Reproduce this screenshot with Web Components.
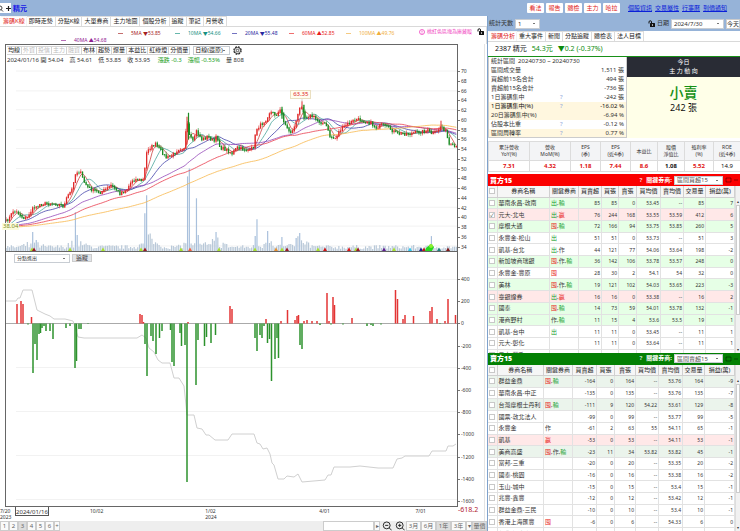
<!DOCTYPE html>
<html lang="zh-Hant">
<head>
<meta charset="utf-8">
<title>精元 籌碼K線</title>
<style>
html,body{margin:0;height:100%}
body{font:6px/9px "Noto Sans","Noto Sans CJK TC",sans-serif;color:#333;background:#fff;overflow:hidden}
</style>
</head>
<body>
<stock-app></stock-app>
<script>
const base = `*{box-sizing:border-box}
button,select,input{font:inherit;color:inherit;margin:0;padding:0;border:0;background:none;border-radius:0}
select{appearance:none;border:1px solid #c8cdd3;background:linear-gradient(#777,#777) right 4px center/2px 1px no-repeat #fff;padding:0 2px;line-height:1}
table{border-collapse:collapse;table-layout:fixed;width:100%}th,td{padding:0;font-weight:400}`;
const define = (name, render, after) => customElements.define(name, class extends HTMLElement {
  connectedCallback() {
    if (this.shadowRoot) return;
    const t = document.createElement('template');
    t.innerHTML = render(this);
    this.attachShadow({ mode: 'open' }).append(t.content.cloneNode(true));
    const s = document.createElement('style'); s.textContent = base; this.shadowRoot.prepend(s);
    if (after) after(this.shadowRoot, this);
  }
});
const lockIcon = `<svg width="7" height="7" viewBox="0 0 14 14" aria-hidden="true"><path d="M2 7V4a2.5 2.5 0 0 1 5 0v2" fill="none" stroke="#111" stroke-width="2"/><rect x="4" y="6" width="10" height="8" rx="1" fill="#111"/><circle cx="9" cy="10" r="1.3" fill="#fff"/></svg>`;

define('app-header', () => `<style>
:host{display:flex;align-items:center;height:16px;background:#96b3d8}
.s{width:11px;height:10px;background:#fff;display:flex;align-items:center;justify-content:space-between}
.n{font-size:7px;font-weight:700;color:#1414e6;margin-left:2px;flex:1}
nav{display:flex;gap:2px}
nav button{background:#fff;color:#e02020;width:17px;height:10px;border-radius:1px;line-height:9px}
.l{width:112px;margin-left:8px;gap:3px}a{color:#0a20d8}
</style><button class="s" aria-label="搜尋"><svg width="4" height="7" viewBox="0 0 4 7"><circle cx="0" cy="3" r="2" fill="none" stroke="#444"/><path d="M1 4.500l2 2" stroke="#444"/></svg><svg width="5" height="5" viewBox="0 0 5 5"><path d="M0 2.500h5M2.500 0v5" stroke="#222" stroke-width="1.200"/></svg></button>
<span class="n">精元</span><nav>${['看法','報告','體檢','主力','哈拉'].map(x=>`<button>${x}</button>`).join('')}</nav>
<nav class="l">${['個股資訊','交易屬性','行事曆','到價通知'].map(x=>`<a href="#">${x}</a>`).join('')}</nav>`);

define('tab-strip', el => `<style>
:host{display:flex;height:11px;border-bottom:1px solid #d9d9d9;padding-left:1px;background:#fff}
button{padding:0 2px;border:1px solid #dcdcdc;border-width:1px 1px 0 0;line-height:9px;color:#222;white-space:nowrap}
button:first-of-type{color:#e02020;border-color:#f4f4f4;padding-right:1px}
</style>${el.getAttribute('items').split(',').map(x=>`<button>${x}</button>`).join('')}`);

define('ma-legend', () => `<style>
:host{display:block;height:17px;padding:1px 8px 0 0;border-right:1px solid #ddd;font-size:5px;line-height:7px;position:relative}
div{display:flex;padding-top:2px}.m{flex:0 0 57px}.m:first-child{margin-left:118px}.m::before{content:"";display:inline-block;width:5px;border-top:1px solid;margin-right:8px;vertical-align:middle;opacity:.65}
.a .m:first-child{margin-left:61px}.a{padding-top:0}.pink{position:absolute;right:2px;top:0;gap:2px;align-items:center;color:#f040c0;padding-top:1px}.pink span{margin-right:3px}
</style><div>${[['5MA ▼53.85','#a52020'],['10MA ▼54.66','#159080'],['20MA ▼55.48','#2828a0'],['60MA ▲52.85','#e82020'],['100MA ▲49.76','#f0ae3c']].map(x=>`<span class="m" style="color:${x[1]}">${x[0]}</span>`).join('')}</div>
<div class="a"><span class="m" style="color:#902090">40MA ▲54.68</span></div>
<div class="pink"><svg width="6" height="6" viewBox="0 0 12 12" aria-hidden="true"><circle cx="6" cy="6" r="5" fill="none" stroke="#f040c0" stroke-width="1.600"/><path d="M6 3v4M6 8v1.500" stroke="#f040c0" stroke-width="1.500"/></svg><span>桃紅色區塊為庫藏股</span>${lockIcon}</div>`);

const keys=[[6,222],[10,218],[13,212],[19,214],[23,219],[30,216],[33,207],[36,209],[40,205],[50,204],[58,205],[64,207],[67,198],[72,190],[74,180],[76,173],[80,172],[84,182],[88,188],[93,191],[100,193],[106,190],[111,186],[114,188],[120,194],[127,190],[132,181],[137,180],[143,181],[145,168],[147,150],[151,148],[155,144],[160,150],[166,158],[172,156],[178,150],[184,148],[187,122],[189,135],[193,142],[196,131],[202,140],[208,137],[214,142],[217,136],[220,148],[226,150],[232,154],[237,148],[245,150],[250,151],[254,146],[256,130],[262,124],[266,120],[270,112],[276,115],[281,110],[284,122],[288,130],[292,133],[296,122],[300,108],[302,106],[305,117],[312,116],[318,121],[326,125],[330,137],[335,139],[339,132],[345,126],[355,120],[360,120],[370,123],[376,128],[382,125],[390,129],[397,134],[410,134],[420,132],[428,131],[432,134],[437,132],[441,126],[446,132],[449,145],[456,148]];
const spikes=[[33,233],[36,241],[75,213],[77,236],[145,214],[147,196],[187,177],[189,169],[196,199],[199,236],[216,233],[255,237],[257,220],[268,232],[282,238],[297,239],[300,234],[431,237]];
let seed=7; const rnd=()=>(seed=(seed*16807)%2147483647)/2147483647;
function priceSvg(){
  const step=1.78,n=254,c=[]; let k=0;
  for(let i=0;i<n;i++){const x=6+i*step;while(k<keys.length-2&&keys[k+1][0]<x)k++;const [a,b]=keys[k],[d,e]=keys[k+1];c.push(b+(e-b)*Math.min(1,(x-a)/(d-a))+(rnd()-.5)*3);}
  const pre=Array.from({length:110},(_,i)=>230-i*.02), all=pre.concat(c);
  let o='';
  for(const y of [71,91,110,130,149,169,188,208,227,247])o+=`<path d="M16 ${y}H457" stroke="#f2f2f2"/>`;
  for(let i=0;i<n;i++){const x=6+i*step;
    const near=keys=>keys.find(s=>Math.abs(s[0]-x)<=step/2);
    const busy=[[33,5],[77,9],[150,13],[190,7],[215,11],[268,10],[300,11]].reduce((m,[p,h])=>m+h*Math.exp(-Math.pow((x-p)/9,2)),0);
    const sp=near(spikes), top=sp?sp[1]:252-2-rnd()*4-busy*rnd();
    o+=`<path d="M${x} 252V${top}" stroke="${sp?'#a9c0dc':'#b8c8d8'}" stroke-width="1.2"/>`;}
  [[5,'#c44'],[10,'#4aa59c'],[20,'#4242aa'],[40,'#9447b8'],[60,'#e83c4c'],[100,'#f8b84c']].forEach(([w,col])=>{
    let s=0,d='';for(let i=110-w;i<110;i++)s+=all[i];
    for(let i=0;i<n;i++){s+=all[i+110]-all[i+110-w];d+=(i?'L':'M')+(6+i*step).toFixed(1)+' '+(s/w).toFixed(1);}
    o+=`<path d="${d}" fill="none" stroke="${col}" stroke-width=".8"/>`;});
  for(let i=0;i<n;i++){const x=6+i*step,p=i?c[i-1]:c[i]+1,up=c[i]<=p,col=up?'#e02a2a':'#1c8c24';
    const hi=Math.min(p,c[i])-rnd()*3,lo=Math.max(p,c[i])+rnd()*3;
    o+=`<path d="M${x} ${hi}V${lo}" stroke="${col}" stroke-width=".6"/><path d="M${x} ${Math.min(p,c[i])-.4}V${Math.max(p,c[i])+.6}" stroke="${col}" stroke-width="1.3"/>`;}
  o+='<path d="M187 117V145M302 101V110M441 121V129" stroke="#e02a2a"/><path d="M188.500 113V140M282 107V119M304 105V120" stroke="#1c8c24" stroke-width="1.200"/><path d="M302 98V102" stroke="#ddd"/>';
  const y='#a8e030',m='#9c1c28';
  [[32,y],[34,m],[70,y],[103,y],[141,y],[145,m],[181,y],[190,'#f06040'],[219,y],[255,y],[276,'#e89030'],[282,y],[287,m],[318,y],[325,'#d01818'],[349,'#e01818'],[356,y],[358,m],[384,'#602090'],[394,y],[410,'#30c8f0'],[421,'#202090'],[424,'#c01818'],[439,'#208080'],[448,'#801818']].forEach(([x,f])=>o+=`<path d="M${x} 248.500l2 3.500h-4z" fill="${f}"/>`);
  return o+'<path d="M431 245l3 3-2 4h-7l1-3z" fill="#28d820"/><circle cx="431" cy="247" r="2" fill="#8cf030"/>';
}
const flow=[[17,304],[21,301],[23,304],[31.5,317],[140,314],[142,315],[143.5,322],[188,322],[230,306],[232,309],[28,324.5],[33,373],[35,344],[37,360],[39,334],[40.5,333],[42,328],[44,326],[46,331],[50,331],[53,339],[66,328],[70,326],[75,368],[76.5,361],[79,329],[81,329],[88,324],[145,344],[147,376],[151,336],[153,341],[156,354],[159.5,338],[162,331],[170.5,330],[172,362],[174,366],[180,333],[181.5,346],[185,345],[187,482],[196,385],[198,340],[204.5,346],[206.5,337],[211,343],[215.5,335],[255,338],[257,351],[260,335],[262,338],[264,326],[266,319],[267.5,343],[269.5,339],[271.5,381],[275,359],[277,338],[278.5,358],[300,345],[302,349],[281,321],[287.5,310],[295,320],[297,316],[298.5,315],[304,321],[307,320],[312,321],[317,321],[327,293],[329,321],[333,297],[334.5,305],[352,318],[395.5,290],[397.5,299],[403,319],[405,315],[413.5,316],[430,311],[432,307],[437,319],[445,321],[448,299],[455.5,315],[320,325],[331,324.5],[343,324.5],[367,326],[371,325],[373,326],[381,324.5],[440,324]];
const flowSvg=()=>[279,323,367,411,455,499].map(y=>`<path d="M${y==323?6:16} ${y+.5}H457" stroke="${y==323?'#aaa':'#f2f2f2'}"/>`).join('')
 +`<path d="M6 301H16L18 298H20L23 290H32L37 310L45 314L50 316L54 319H65L73 321L78 337L84 338H137L142 335L146 338L149 348L154 352L158 360L162 363H170L174 378H179L184 386L187 415H194L197 428L202 429L206 435H209L215 440H228L232 434H254L257 443L260 444L263 449L267 448L270 454L272 463L274 465L278 479H284L287 476L294 477L298 474L302 482L325 480L328 475H331L334 467H350L360 466L378 468H393L397 459L402 458L405 456H429L432 451H446L448 446H453L456 444" fill="none" stroke="#d0d0d0"/>`
 +flow.map(([x,y])=>`<path d="M${x} 323.500V${y}" stroke="${y<323.5?'#e33434':'#2c922c'}" stroke-width="1.500"/>`).join('');

define('k-chart', () => `<style>
:host{display:grid;grid-template-columns:5px minmax(0,1fr) 26px;grid-template-rows:22px minmax(0,186fr) 14px minmax(0,241fr);flex:1;min-height:0;border-right:1px solid #e4e4e4;margin-right:2px}
.c{grid-column:2;border:0 solid #666;border-width:0 1px}
.top{border-top-width:1px}.t{display:flex;height:10px;align-items:center;padding-left:1px;color:#222}
.t button{padding:0 1px;border:1px solid #d4d4d4;border-left:0;height:9px;line-height:7px}.t .off{color:#bbb}.t select{width:37px;height:9px;margin:0 3px;padding:0 1px}
.i{display:flex;gap:6px;padding-left:1px;font-size:6px;line-height:10px;white-space:nowrap}.g{color:#20a020}
.price,.flow{border-bottom-width:1px;position:relative;min-height:0}svg.p{display:block;width:100%;height:100%}
.tag{position:absolute;background:#fffdf0;border:1px solid #eadfc0;color:#e02020;line-height:7px;padding:0 2px;left:63%;top:13%;font-size:6px}
.low{left:-4px;top:85%;color:#7c8a20;border:0;background:#fbfbdc;padding:0 1px}
.s{display:flex;align-items:center;gap:2px;padding:0 0 2px 8px}.s select{width:56px;height:9px;font-size:5px}.s button{width:20px;height:8px;background:#e2e5ea;border:1px solid #ccc;line-height:6px}
.ax{grid-column:3;display:flex;flex-direction:column;justify-content:space-between;font-size:5px;color:#333;padding-top:1px}.ax span{line-height:9px;display:flex;align-items:center}.ax span::before{content:"";width:2px;border-top:1px solid #777;margin-right:1px}
.f{padding:9px 0 1px}
</style>
<div class="c top"><div class="t">${['均線','外資','投信','主力','融資','布林','趨勢','爆量','本益比','紅綠燈','分價量'].map((x,i)=>`<button class="${i>0&&i<5?'off':''}">${x}</button>`).join('')}<select aria-label="線型"><option>日線(還原)</option></select><svg width="9" height="9" viewBox="0 0 18 18"><circle cx="9" cy="9" r="7" fill="none" stroke="#222" stroke-width="3" stroke-dasharray="3.500 2"/><circle cx="9" cy="9" r="6" fill="#fff" stroke="#222" stroke-width="1.500"/><circle cx="9" cy="9" r="2.500" fill="none" stroke="#222" stroke-width="1.500"/></svg></div>
<div class="i"><span>2024/01/16 開 54.04</span><span>高 54.61</span><span>低 53.85</span><span>收 53.95</span><span class="g">&nbsp;漲跌 -0.3</span><span class="g">漲幅 -0.53%</span><span>量 808</span></div></div>
<div class="c price"><svg class="p" viewBox="6 66 451 186" preserveAspectRatio="none">${priceSvg()}</svg><span class="tag">63.35</span><span class="tag low">38.04</span></div>
<div class="ax">${Array.from({length:19},(_,i)=>`<span>${70-2*i}</span>`).join('')}</div>
<div class="c s"><select aria-label="指標"><option>分點進出</option></select><button>追蹤</button></div>
<div class="c flow"><svg class="p" viewBox="6 266 451 240" preserveAspectRatio="none">${flowSvg()}</svg></div>
<div class="ax f">${Array.from({length:11},(_,i)=>`<span>${400-200*i}</span>`).join('')}</div>`);

define('date-axis', () => `<style>
:host{display:grid;grid-template-columns:15px 34px 32px minmax(0,90fr) minmax(0,90fr) minmax(0,90fr) minmax(0,38fr) 26px;height:14px;font-size:5px;line-height:6px;white-space:nowrap;border-right:1px solid #e4e4e4;margin-right:2px}
.d{border:1px solid #555;border-top:0;height:9px;line-height:8px;text-align:center;font-size:6px}.b{padding-left:9px}.r{color:#b02030;font-size:7px;line-height:4px}.e{padding-left:4px}
span{padding-top:1px}.m{padding-left:14px}.m+.m{padding-left:18px}
</style><span>7/20<br>2023</span><span class="d">2024/01/16</span><span></span><span class="b">10/02</span><span class="m">1/02<br>2024</span><span class="m">4/01</span><span class="e">7/01</span><span class="r">-618.2</span>`);

define('chart-footer', () => `<style>
:host{display:flex;height:10px;background:#eee;align-items:stretch;color:#666}
button{width:9px;border:1px solid #ccc;background:#fafafa;line-height:8px}.on{background:#ddd}.sp{flex:1}.w{width:51px;height:10px;background:#fff;border:1px solid #ccc}.z{width:13px;border:0;background:none;display:grid;place-items:center}.m{width:15px}.n{width:6px}
</style>${[1,2,3,4,5,6].map(x=>`<button class="${x==3?'on':''}">${x}</button>`).join('')}<button class="n">+</button><span class="sp"></span><input class="w" aria-label="範圍"><button class="n">▸</button>
${['M5 7h5','M5 7h5M7.5 4.500v5'].map(p=>`<button class="z" aria-label="縮放"><svg width="10" height="10" viewBox="0 0 16 16"><g fill="none" stroke="#222" stroke-width="1.500"><circle cx="7.500" cy="7" r="5.500"/><path d="M11.500 11l4 4"/><path d="${p}"/></g></svg></button>`).join('')}
<button class="m">3月</button><button class="m">6月</button><button class="m on">1年</button><button class="m">3年</button><button class="n">▾</button><button class="m on">量價</button>`);

define('stock-summary', () => `<style>
:host{display:block}
.bar{display:flex;align-items:center;height:15px;background:#96b3d8;font-size:7px;padding:0 0 0 1px;gap:2px}.bar label{font-size:6px}.bar select{font-size:6px;width:25px;height:10px}.bar .x{flex:1}.bar .dt{width:53px}.bar button{background:#fff;border:1px solid #ccc;height:10px;width:14px;font-size:6px;line-height:8px}
.tk{display:flex;gap:5px;font-size:7px;line-height:13px;height:15px;padding-left:7px;border-bottom:1px solid #189018;color:#111}.tk .g{color:#0a8a0a}
.mid{display:grid;grid-template-columns:139px minmax(0,1fr);height:81px}
.st{overflow:hidden;border:1px solid #ccc;border-top:0}.st td{height:9px;line-height:9px;padding:0 2px}.st td+td{text-align:right}.st .h{background:#fff7df}.st td.q{color:#88a0d8;text-align:left}.st .b{color:#111;font-weight:500}
.sig{background:#ffffe8;text-align:center;color:#111}.sig p{margin:0;background:#292c35;color:#fff;line-height:9px;padding:1px 0}.sig b{display:block;color:#149014;font-size:14px;line-height:16px;margin-top:8px;font-weight:500}.sig span{font-size:9px;line-height:13px}
.fin{margin-top:3px;font-size:5px;text-align:center}.fin th{height:19px;line-height:7px;background:#f3f4f6;border:1px solid #dcdcdc}.fin td{height:11px;line-height:9px;border:1px solid #dcdcdc;color:#e01010;font-weight:700;font-size:6px}.fin .k{color:#111}.fin .p{font-weight:400}
</style><div class="bar"><label for="days">統計天數</label><select id="days"><option>1</option></select><span class="x"></span>${lockIcon}<label for="date">日期</label><select id="date" class="dt"><option>2024/7/30</option></select><button>今天</button></div>
<tab-strip items="籌碼分析,重大事件,新聞,分點追蹤,體檢表,法人目標"></tab-strip>
<div class="tk"><span>2387 精元</span><span class="g">54.3元</span><span class="g">▼0.2 (-0.37%)</span></div>
<div class="mid"><div class="st"><table><colgroup><col><col style="width:22px"><col style="width:46px"></colgroup><tr><td colspan="3">統計區間 &nbsp;20240730 ~ 20240730</td></tr>
${[['區間成交量','','1,511 張'],['買超前15名合計','','494 張'],['賣超前15名合計','','-736 張'],['1日籌碼集中','?','-242 張'],['1日籌碼集中(%)','?','-16.02 %','h b'],['20日籌碼集中(%)','','-6.94 %','h'],['佔股本比重','?','-0.12 %'],['區間周轉率','?','0.77 %','h']].map(r=>`<tr class="${r[3]||''}"><td>${r[0]}</td><td class="q">${r[1]}</td><td>${r[2]}</td></tr>`).join('')}</table></div>
<div class="sig"><p>今日<br>主 力 動 向</p><b>小賣</b><span>242 張</span></div></div>
<table class="fin"><colgroup>${[41,41,30,30,27,27,29,27].map(w=>`<col style="width:${w}px">`).join('')}</colgroup><tr><th>累計營收<br>YoY(%)<th>營收<br>MoM(%)<th>EPS<br>(季)<th>EPS<br>(近4季)<th>本益比<th>股價<br>淨值比<th>殖利率<br>(%)<th>ROE<br>(近4季)</tr><tr><td>7.31<td>4.32<td>1.18<td>7.44<td>8.6<td class="k">1.08<td>5.52<td class="k p">14.9</tr></table>`);

const sets={buy:{title:'買方15',opt:'區間買超15',color:'#fb0000',tint:'#e6ffe6',w:[9,52,29,23,17,18,24,23,22,29],rows:`華南永昌-敦南|出,輸|85|85|0|53.45|--|85|7|g
元大-北屯|出,贏|76|244|168|53.55|53.59|412|6|r
摩根大通|囤,輸|72|166|94|53.75|53.85|260|5|g
永豐金-松山|出|51|51|0|53.73|--|51|3|
凱基-台北|出,作|44|121|77|54.06|53.64|198|-2|
新加坡商瑞銀|囤,作,輸|36|142|106|53.78|53.57|248|0|g
永豐金-豐原|囤|28|30|2|54.1|54|32|0|
美林|囤,作,輸|19|121|102|54.03|53.65|223|-3|g
臺銀證券|出,贏|16|16|0|53.38|--|16|2|r
國泰|囤,輸|14|73|59|54.01|53.78|132|-1|g
港商野村|作,輸|11|15|4|53.6|53.5|19|1|g
凱基-台中|出|11|11|0|53.45|--|11|1|
元大-彰化||11|11|0|53.64|--|11|1|
元大-鶯歌||11|11|0|53.7|--|11|1|`},
sell:{title:'賣方15',opt:'區間賣超15',color:'#038003',tint:'#ebf4ec',w:[9,46,29,24,18,21,23,24,22,30],rows:`群益金鼎|囤,輸|-164|0|164|--|53.76|164|-9|g
華南永昌-中正||-135|0|135|--|53.76|135|-7|
台灣摩根士丹利|囤,輸|-111|9|120|54.22|53.61|129|-8|g
國票-敦北法人||-99|0|99|--|53.77|99|-5|
永豐金|作|-61|2|63|55|54.11|65|-1|
凱基|贏|-53|0|53|--|54.11|53|-1|r
美商高盛|囤,作,輸|-23|11|34|53.82|53.82|45|-1|g
富邦-三重||-20|0|20|--|53.35|20|-2|
國泰-桃園||-16|0|16|--|53.38|16|-2|
玉山-城中||-15|0|15|--|53.4|15|-1|
兆豐-鑫豐||-12|0|12|--|53.42|12|-1|
群益金鼎-三民||-10|0|10|--|53.4|10|-1|
香港上海匯豐|囤|-6|0|6|--|54.33|6|0|
永豐金-大安||-6|0|6|--|53.5|6|0|`}};
const tagCol={出:'#18a030',輸:'#18a030',囤:'#e82020',贏:'#e82020',作:'#444'};
define('broker-table', el => {const s=sets[el.getAttribute('side')];return `<style>
:host{display:flex;flex-direction:column;flex:1;min-height:0}
.h{display:flex;align-items:center;height:12px;background:${s.color};color:#fff;font-size:7px;font-weight:700;padding:0 0 0 2px}.h b{flex:1}.h .q{font-size:6px;opacity:.8;margin-right:4px}.h label{font-size:6px}.h select{color:#555;font-size:6px;font-weight:400;width:49px;height:9px;margin:0 2px}.h svg{margin-right:1px}
.body{display:flex;flex:1;min-height:0;overflow:hidden}.tb{flex:1;min-width:0;overflow:hidden}
table{height:calc(100% + 9px)}th,td{border:0 solid #e2e2e2;border-width:0 1px 1px 0;line-height:8px;text-align:center;white-space:nowrap}
th{background:#f6f6f6;border-color:#d0d0d0;color:#222}td.n{font-size:5px;text-align:right;padding-right:1px}td.l{text-align:left;padding-left:1px}
.g{background:${s.tint}}.r{background:#ffe8e8}
input{appearance:none;display:block;width:6px;height:6px;border:1px solid #c8c8c8;background:#fff;margin:auto;line-height:4px;font-size:5px}input:checked::after{content:"✓"}
.sc{width:5px;background:#f1f1f1;border-left:1px solid #ddd;display:flex;flex-direction:column;padding-top:12px;text-align:center;font-size:4px;line-height:7px}.sc i{flex:7;background:#fff;border:1px solid #ccc}.sc u{flex:2}
</style><div class="h"><b>${s.title}</b><span class="q">?</span><label for="k">關鍵券商:</label><select id="k"><option>${s.opt}</option></select><svg width="14" height="6" viewBox="0 0 14 6"><path d="M1 1h5v4h-5zM9 3h4" fill="none" stroke="#0006"/></svg></div>
<div class="body"><div class="tb"><table><colgroup>${s.w.map((w,i)=>i==1?'<col>':`<col style="width:${w}px">`).join('')}</colgroup><tr><th><input type="checkbox" aria-label="全選"></th>${['券商名稱','關鍵券商','買賣超','買張','賣張','買均價','賣均價','交易量','損益(萬)'].map(x=>`<th>${x}</th>`).join('')}</tr>
${s.rows.split('\n').map(l=>{const r=l.split('|');return `<tr class="${r[9]}"><td><input type="checkbox" aria-label="${r[0]}"${r[0]=='元大-北屯'?' checked':''}></td><td class="l">${r[0]}</td><td class="l">${r[1].split(',').filter(Boolean).map(t=>`<span style="color:${tagCol[t]}">${t}</span>`).join(',')}</td>${r.slice(2,9).map(v=>`<td class="n">${v}</td>`).join('')}</tr>`}).join('')}</table></div><div class="sc">▴<i></i><u></u>▾</div></div>`});

define('stock-app', () => `<style>
:host{display:flex;flex-direction:column;height:100vh}
main{display:grid;grid-template-columns:minmax(0,487fr) minmax(0,253fr);flex:1;min-height:0}
section{display:flex;flex-direction:column;min-height:0;min-width:0}
.right{border-left:1px solid #7fa2cc}stock-summary{margin-bottom:2px}
</style><app-header></app-header><main><section><tab-strip items="籌碼K線,即時走勢,分點K線,大單券商,主力地圖,個股分析,追蹤,筆記,月營收"></tab-strip><ma-legend></ma-legend><k-chart></k-chart><date-axis></date-axis><chart-footer></chart-footer></section>
<section class="right"><stock-summary></stock-summary><broker-table side="buy"></broker-table><broker-table side="sell"></broker-table></section></main>`);
</script>
</body>
</html>
